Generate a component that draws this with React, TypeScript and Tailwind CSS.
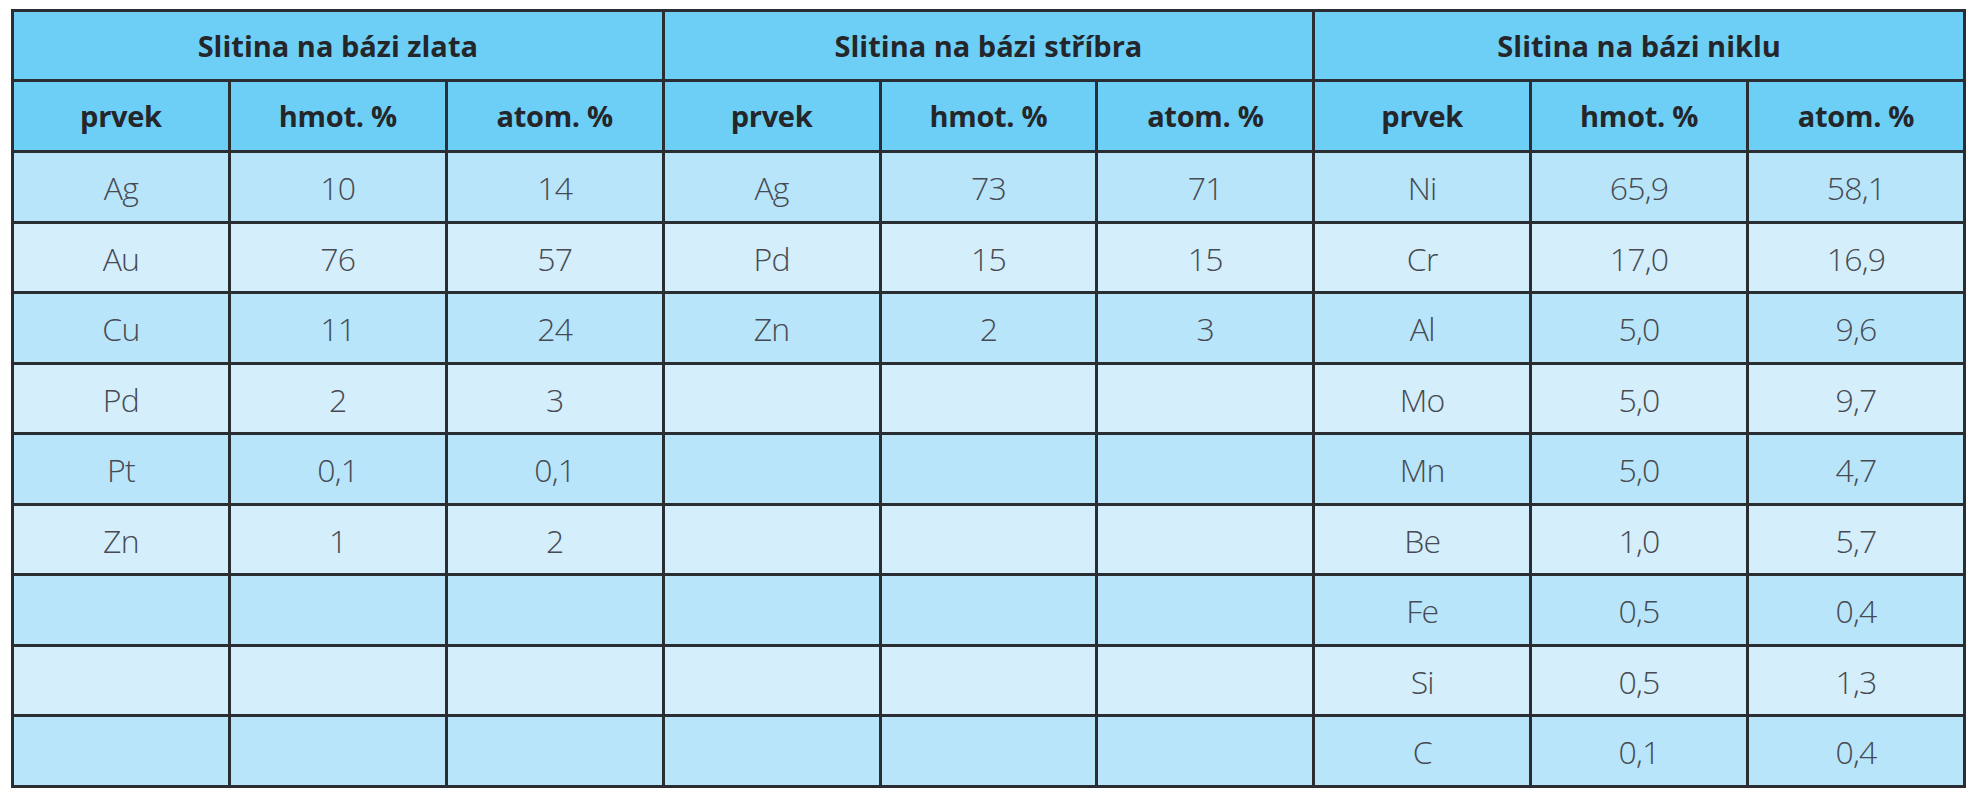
const groups = [
  {
    title: 'Slitina na bázi zlata',
    rows: [
      ['Ag', '10', '14'],
      ['Au', '76', '57'],
      ['Cu', '11', '24'],
      ['Pd', '2', '3'],
      ['Pt', '0,1', '0,1'],
      ['Zn', '1', '2'],
    ],
  },
  {
    title: 'Slitina na bázi stříbra',
    rows: [
      ['Ag', '73', '71'],
      ['Pd', '15', '15'],
      ['Zn', '2', '3'],
    ],
  },
  {
    title: 'Slitina na bázi niklu',
    rows: [
      ['Ni', '65,9', '58,1'],
      ['Cr', '17,0', '16,9'],
      ['Al', '5,0', '9,6'],
      ['Mo', '5,0', '9,7'],
      ['Mn', '5,0', '4,7'],
      ['Be', '1,0', '5,7'],
      ['Fe', '0,5', '0,4'],
      ['Si', '0,5', '1,3'],
      ['C', '0,1', '0,4'],
    ],
  },
]

const ROWS = 9

export default function App() {
  return (
    <div className="min-h-[800px] bg-white pl-[11px] pt-[9px] [font-family:'Open_Sans',sans-serif]">
      <table className="w-[1955px] table-fixed border-collapse border-[3px] border-[#2a2d31]">
        <thead>
          <tr className="h-[70px] bg-[#6dcff6]">
            {groups.map((g) => (
              <th
                key={g.title}
                colSpan={3}
                className="border-[3px] border-[#2a2d31] text-[29px] font-bold text-[#24262a] font-stretch-normal"
              >
                {g.title}
              </th>
            ))}
          </tr>
          <tr className="h-[71px] bg-[#6dcff6]">
            {groups.map((g) =>
              ['prvek', 'hmot. %', 'atom. %'].map((h) => (
                <th
                  key={g.title + h}
                  className="border-[3px] border-[#2a2d31] text-[29px] font-bold tracking-[-0.3px] text-[#24262a] font-stretch-normal"
                >
                  {h}
                </th>
              ))
            )}
          </tr>
        </thead>
        <tbody>
          {Array.from({ length: ROWS }).map((_, i) => (
            <tr key={i} className={`h-[70.5px] ${i % 2 === 0 ? 'bg-[#b9e5fa]' : 'bg-[#d4eefb]'}`}>
              {groups.map((g) =>
                [0, 1, 2].map((c) => (
                  <td
                    key={g.title + c}
                    className="border-[3px] border-[#2a2d31] pt-[3px] text-center text-[32px] font-light tracking-[-0.8px] text-[#464a52] font-stretch-normal"
                  >
                    {g.rows[i]?.[c] ?? ''}
                  </td>
                ))
              )}
            </tr>
          ))}
        </tbody>
      </table>
    </div>
  )
}
